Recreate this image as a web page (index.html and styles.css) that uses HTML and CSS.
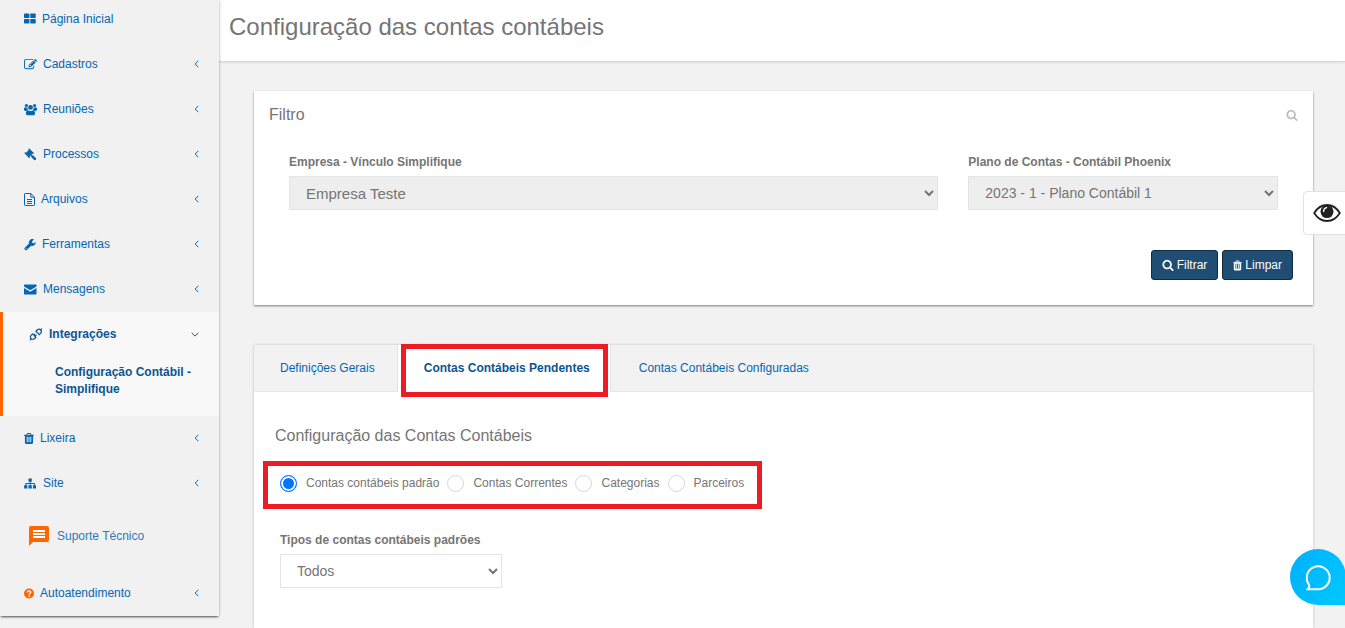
FILE: index.html
```html
<!DOCTYPE html>
<html lang="pt-BR">
<head>
<meta charset="utf-8">
<meta name="viewport" content="width=device-width, initial-scale=1">
<title>Configuração das contas contábeis</title>
<link rel="stylesheet" href="styles.css">
</head>
<body>
<svg class="sprite" aria-hidden="true">
  <symbol id="i-left" viewBox="0 0 5 8"><path d="M4.300 .8 1.200 4l3.100 3.200" fill="none" stroke="currentColor" stroke-width="1"/></symbol>
  <symbol id="i-search" viewBox="0 0 1792 1792"><path d="M1216 832q0-185-131.500-316.500t-316.500-131.500-316.500 131.500-131.500 316.500 131.500 316.500 316.500 131.500 316.500-131.500 131.500-316.500zm512 832q0 52-38 90t-90 38q-54 0-90-38l-343-342q-179 124-399 124-143 0-273.500-55.500t-225-150-150-225-55.500-273.500 55.500-273.500 150-225 225-150 273.500-55.500 273.500 55.500 225 150 150 225 55.500 273.500q0 220-124 399l343 343q37 37 37 90z"/></symbol>
  <symbol id="i-trash" viewBox="192 128 1408 1536"><path d="M704 1376v-704q0-14-9-23t-23-9h-64q-14 0-23 9t-9 23v704q0 14 9 23t23 9h64q14 0 23-9t9-23zm256 0v-704q0-14-9-23t-23-9h-64q-14 0-23 9t-9 23v704q0 14 9 23t23 9h64q14 0 23-9t9-23zm256 0v-704q0-14-9-23t-23-9h-64q-14 0-23 9t-9 23v704q0 14 9 23t23 9h64q14 0 23-9t9-23zm-544-992h448l-48-117q-7-9-17-11h-317q-10 2-17 11zm928 32v64q0 14-9 23t-23 9h-96v948q0 83-47 143.500t-113 60.500h-832q-66 0-113-58.500t-47-141.500v-952h-96q-14 0-23-9t-9-23v-64q0-14 9-23t23-9h309l70-167q15-37 54-63t79-26h320q40 0 79 26t54 63l70 167h309q14 0 23 9t9 23z"/></symbol>
</svg>

<div class="layout">
  <nav class="sidebar" aria-label="Menu principal">
    <ul class="menu">
      <li><a class="item" href="#">
        <svg class="ico w12" viewBox="0 0 12 12"><rect x="0" y="0" width="5.400" height="4.600" rx=".7"/><rect x="6.300" y="0" width="5.400" height="4.600" rx=".7"/><rect x="0" y="5.400" width="5.400" height="4.600" rx=".7"/><rect x="6.300" y="5.400" width="5.400" height="4.600" rx=".7"/></svg>
        <span>Página Inicial</span></a></li>
      <li><a class="item" href="#">
        <svg class="ico w13" viewBox="0 0 1792 1792"><path d="M888 1184l116-116-152-152-116 116v56h96v96h56zm440-720q-16-16-33 1l-350 350q-17 17-1 33t33-1l350-350q17-17 1-33zm80 594v190q0 119-84.500 203.500t-203.500 84.500h-832q-119 0-203.500-84.500t-84.500-203.500v-832q0-119 84.500-203.500t203.500-84.500h832q63 0 117 25 15 7 18 23 3 17-9 29l-49 49q-14 14-32 8-23-6-45-6h-832q-66 0-113 47t-47 113v832q0 66 47 113t113 47h832q66 0 113-47t47-113v-126q0-13 9-22l64-64q15-15 35-7t20 29zm-96-738l288 288-672 672h-288v-288zm444 132l-92 92-288-288 92-92q28-28 68-28t68 28l152 152q28 28 28 68t-28 68z"/></svg>
        <span>Cadastros</span><svg class="chev"><use href="#i-left"/></svg></a></li>
      <li><a class="item" href="#">
        <svg class="ico w13" viewBox="0 0 14 13"><circle cx="2.600" cy="2.200" r="1.700"/><circle cx="11.400" cy="2.200" r="1.700"/><circle cx="7" cy="4.300" r="2.600"/><path d="M0 6.200C0 5 .4 4 1.200 4c.7.500 1.500.6 2.400.3-.1 1 .2 2 .8 2.700C3.500 7 2.800 7.300 2.300 8H1.400C.5 8 0 7.300 0 6.200zM14 6.200c0-1.200-.4-2.200-1.200-2.200-.7.500-1.500.6-2.400.3.1 1-.2 2-.8 2.700.9 0 1.600.3 2.100 1h.9c.9 0 1.400-.7 1.400-1.800zM2.100 10.800c0-2 .7-3.600 2.300-3.600 1.600 1.200 3.600 1.200 5.200 0 1.600 0 2.300 1.600 2.300 3.600 0 1.200-.8 1.900-2 1.900H4.100c-1.200 0-2-.7-2-1.900z"/></svg>
        <span>Reuniões</span><svg class="chev"><use href="#i-left"/></svg></a></li>
      <li><a class="item" href="#">
        <svg class="ico w13" viewBox="0 0 13 13"><path d="M1.500 5.300 5.300 1.500 8.900 5.100 5.100 8.900z"/><path d="M5 1.200 9.100 5.300M1.200 5 5.300 9.100" fill="none" stroke="currentColor" stroke-width="1.500" stroke-linecap="round"/><path d="M6.800 6.800l1.300 1.300" fill="none" stroke="currentColor" stroke-width="1.500"/><path d="M8.600 8.600l2.300 2.300" fill="none" stroke="currentColor" stroke-width="2.700" stroke-linecap="round"/></svg>
        <span>Processos</span><svg class="chev"><use href="#i-left"/></svg></a></li>
      <li><a class="item" href="#">
        <svg class="ico w11" viewBox="0 0 11 13"><path d="M.5 1.200q0-.7.700-.7h5.600l3.700 3.700v7.600q0 .7-.7.700H1.200q-.7 0-.7-.7zM6.800.5v3.700h3.700M3 6.500h5M3 8.500h5M3 10.400h5" fill="none" stroke="currentColor"/></svg>
        <span>Arquivos</span><svg class="chev"><use href="#i-left"/></svg></a></li>
      <li><a class="item" href="#">
        <svg class="ico w12" viewBox="0 0 12 12"><path fill-rule="evenodd" d="M.6 9.400 5 5C4.500 2.500 6.300.6 8.300.6c.8 0 1.500.2 2 .5L8.200 2.600v1.500l1.400.8 2-1.300c.4 2.200-1.100 3.800-3.100 3.800-.5 0-.9-.1-1.300-.2L2.700 11.500c-.5.400-1 .4-1.400 0l-.7-.7c-.4-.4-.4-1 0-1.400zM2.100 9.400a.5.500 0 1 0 .1 1 .5.500 0 0 0-.1-1z"/></svg>
        <span>Ferramentas</span><svg class="chev"><use href="#i-left"/></svg></a></li>
      <li><a class="item" href="#">
        <svg class="ico w13" viewBox="0 0 13 11"><path d="M.6.500h11.300q.6 0 .6.600v1.500L6.300 6.200 0 2.600V1.100Q0 .5.600.500zM0 4l6.300 3.700L12.500 4v5.800q0 .7-.6.700H.6q-.6 0-.6-.7z"/></svg>
        <span>Mensagens</span><svg class="chev"><use href="#i-left"/></svg></a></li>
      <li class="open"><a class="item" href="#" aria-expanded="true">
        <svg class="ico w14" viewBox="0 0 14 14"><g fill="none" stroke="currentColor" stroke-width="1.300" stroke-linecap="round"><path d="M3.200 6.400 1.900 7.700c-1.100 1.100-1.100 2.700-.1 3.700s2.600 1 3.700-.1l1.300-1.300zM7 3.500l1.300-1.300c1.100-1.100 2.700-1.100 3.700-.1s1 2.600-.1 3.700L10.600 7.100zM1.900 11.400.8 12.700M11.900 2.100 13.100.9M4.600 7.700l1.200-1.200M5.900 9l1.200-1.200"/></g></svg>
        <span>Integrações</span><svg class="chev down" viewBox="0 0 8 5"><path d="M.7.900 4 4.100 7.300.9" fill="none" stroke="currentColor"/></svg></a>
        <a class="sub" href="#">Configuração Contábil - Simplifique</a></li>
      <li><a class="item" href="#">
        <svg class="ico w10"><use href="#i-trash"/></svg>
        <span>Lixeira</span><svg class="chev"><use href="#i-left"/></svg></a></li>
      <li><a class="item" href="#">
        <svg class="ico w13" viewBox="0 0 13 12"><path d="M4.500 1h3.300v3.200H6.600v1.300h4.200v2.300H12v3.200H8.900V7.800h1V6.400H6.600v1.400h1.200V11H4.500V7.800h1.200V6.400H2.400v1.400h1V11H.1V7.800h1.300V5.500h4.300V4.200H4.500z"/></svg>
        <span>Site</span><svg class="chev"><use href="#i-left"/></svg></a></li>
      <li><a class="item support" href="#">
        <svg class="bubble" viewBox="0 0 20 20"><path d="M2 0h16q2 0 2 2v12q0 2-2 2H4l-4 4V2Q0 0 2 0z"/><path d="M4 4h12v2H4zM4 7h12v2H4zM4 10h12v2H4z" fill="#fff"/></svg>
        <span>Suporte Técnico</span></a></li>
      <li><a class="item" href="#">
        <svg class="ico w10 orange" viewBox="0 0 11 12"><circle cx="5.500" cy="6" r="5.500"/><path d="M3.700 4.800c.1-2.300 3.800-2.200 3.700-.1 0 1.100-1.700 1.200-1.700 2.400M5.700 8v1.500" fill="none" stroke="#fff" stroke-width="1.500"/></svg>
        <span>Autoatendimento</span><svg class="chev"><use href="#i-left"/></svg></a></li>
    </ul>
  </nav>

  <div class="page">
    <header class="page-header"><h1>Configuração das contas contábeis</h1></header>
    <main class="content">
      <section class="panel">
        <div class="panel-head">
          <h2>Filtro</h2>
          <button class="icon-button" type="button" aria-label="Pesquisar"><svg><use href="#i-search"/></svg></button>
        </div>
        <form class="filter">
          <div class="fields">
            <div class="field wide">
              <label for="empresa">Empresa - Vínculo Simplifique</label>
              <select id="empresa" class="large" disabled><option>Empresa Teste</option></select>
            </div>
            <div class="field narrow">
              <label for="plano">Plano de Contas - Contábil Phoenix</label>
              <select id="plano" disabled><option>2023 - 1 - Plano Contábil 1</option></select>
            </div>
          </div>
          <div class="actions">
            <button class="btn" type="button"><svg><use href="#i-search"/></svg>Filtrar</button>
            <button class="btn" type="button"><svg class="bin"><use href="#i-trash"/></svg>Limpar</button>
          </div>
        </form>
      </section>

      <section class="panel tabs-panel">
        <nav class="tabs" aria-label="Contas">
          <a href="#">Definições Gerais</a>
          <a href="#" class="active" aria-current="page">Contas Contábeis Pendentes</a>
          <a href="#">Contas Contábeis Configuradas</a>
        </nav>
        <div class="tab-body">
          <h2>Configuração das Contas Contábeis</h2>
          <fieldset class="choices">
            <label><input type="radio" name="tipo" checked>Contas contábeis padrão</label>
            <label><input type="radio" name="tipo">Contas Correntes</label>
            <label><input type="radio" name="tipo">Categorias</label>
            <label><input type="radio" name="tipo">Parceiros</label>
          </fieldset>
          <div class="field types">
            <label for="tipos">Tipos de contas contábeis padrões</label>
            <select id="tipos"><option>Todos</option></select>
          </div>
        </div>
      </section>
    </main>
  </div>
</div>

<button class="eye" type="button" aria-label="Acessibilidade">
  <svg viewBox="0 0 28 20"><path d="M1.200 10C4.500 4.600 9 2 14 2s9.500 2.600 12.800 8C23.500 15.400 19 18 14 18S4.500 15.400 1.200 10z" fill="#fff" stroke="#222" stroke-width="1.800"/><circle cx="14" cy="8.600" r="6.500" fill="#222"/><path d="M10.600 8.500c0-2 1.200-3.500 3-3.800" fill="none" stroke="#fff" stroke-width="1.300" stroke-linecap="round"/></svg>
</button>
<button class="chat" type="button" aria-label="Abrir chat">
  <svg viewBox="0 0 26 26"><path d="M1.800 24.200c1.500-1.500 1.900-3 1.100-4.700A11.500 11.500 0 1 1 13 24.200z" fill="none" stroke="#fff" stroke-width="2"/></svg>
</button>
</body>
</html>
```

FILE: styles.css
```css
* { box-sizing: border-box; }

body {
  margin: 0;
  height: 100vh;
  overflow: hidden;
  background: #f2f2f2;
  color: #757575;
  font: 12px/17px "Liberation Sans", Arial, sans-serif;
}

h1, h2 { margin: 0; font-weight: 400; }
a { color: #0466b0; text-decoration: none; }
svg { fill: currentColor; flex: none; }
button, select, input { font-family: inherit; }
.sprite { position: absolute; width: 0; height: 0; }

.layout { display: flex; align-items: flex-start; height: 100%; }

/* Sidebar */
.sidebar {
  flex: 0 0 219px;
  background: #f1f1f1;
  box-shadow: 0 2px 2px -1px rgba(0, 0, 0, .6), 0 0 3px rgba(0, 0, 0, .25);
  clip-path: inset(0 -4px -6px 0);
  z-index: 1;
}
.menu { list-style: none; margin: -3px 0 0; padding: 0; }
.item {
  display: flex;
  align-items: center;
  gap: 6px;
  height: 45px;
  padding: 0 20px 1px 24px;
}
.ico { height: 13px; }
.w10 { width: 10px; }
.w11 { width: 11px; }
.w12 { width: 12px; }
.w13 { width: 13px; }
.w14 { width: 14px; }
.chev { width: 5px; height: 8px; margin-left: auto; }
.chev.down { width: 8px; height: 5px; }
.orange { color: #f60; }
.open {
  padding-bottom: 18px;
  border-left: 3px solid #f60;
  background: #f8f8f8;
  font-weight: 700;
}
.open a { color: #0c5590; }
.open .item { padding-left: 26px; }
.sub { display: block; padding: 7px 16px 0 52px; }
.support { gap: 8px; height: 65px; padding: 0 20px 5px 29px; color: #2f79b9; }
.bubble { width: 20px; height: 20px; color: #f60; }

/* Page */
.page { flex: 1; min-width: 0; display: flex; flex-direction: column; height: 100%; }
.page-header {
  padding: 12px 10px 19px;
  background: #fff;
  border-bottom: 1px solid #d9d9d9;
  box-shadow: 0 1px 2px rgba(0, 0, 0, .08);
}
h1 { font-size: 24px; line-height: 30px; }
.content {
  flex: 1;
  display: flex;
  flex-direction: column;
  gap: 40px;
  padding: 29px 32px 0 35px;
}
.panel { background: #fff; box-shadow: 0 1px 2px rgba(0, 0, 0, .5); }
.panel h2 { font-size: 16px; line-height: 24px; }
.panel-head {
  display: flex;
  align-items: center;
  justify-content: space-between;
  padding: 12px 15px 0;
}
.icon-button { padding: 0; border: 0; background: none; color: #bdbdbd; line-height: 0; }
.icon-button svg { width: 12px; height: 12px; }
.filter { padding: 27px 20px 25px 35px; }
.fields {
  display: grid;
  grid-template-columns: repeat(12, 1fr);
  column-gap: 30px;
  padding-right: 15px;
}
.wide { grid-column: span 8; }
.narrow { grid-column: span 4; }
.field { display: flex; flex-direction: column; gap: 5px; }
.field label { font-weight: 700; }
select {
  width: 100%;
  height: 34px;
  padding: 0 0 0 12px;
  border: 1px solid #e2e4e6;
  border-radius: 0;
  background: #fff;
  color: #757575;
  font-size: 14px;
}
select:disabled { background: #eee; color: #757575; opacity: 1; }
select.large { font-size: 15px; }
.actions { display: flex; justify-content: flex-end; gap: 4px; margin-top: 40px; }
.btn {
  display: flex;
  align-items: center;
  gap: 3px;
  height: 30px;
  padding: 0 10px;
  border: 1px solid #122b40;
  border-radius: 3px;
  background: #204d74;
  color: #fff;
  font-size: 12px;
}
.btn svg { width: 12px; height: 12px; }
.btn .bin { width: 9px; height: 11px; }

/* Tabs */
.tabs-panel { flex: 1; box-shadow: 0 0 3px rgba(0, 0, 0, .2); }
.tabs { display: flex; background: #f2f2f2; border-bottom: 1px solid #e7e7e7; }
.tabs a { padding: 15px 21px 14px 26px; }
.tabs .active {
  position: relative;
  margin: 0 2px -1px 1px;
  padding-right: 20px;
  border: solid #e4e4e4;
  border-width: 0 1px;
  background: #fff;
  color: #0c5590;
  font-weight: 700;
}
.tabs .active::after {
  content: "";
  position: absolute;
  inset: -1px 2px -5px 3px;
  border: 5px solid #ed1c24;
}
.tab-body { padding: 32px 9px 0; }
.tab-body h2 { padding-left: 12px; }
.choices {
  display: flex;
  align-items: center;
  gap: 8px;
  width: fit-content;
  height: 48px;
  margin: 13px 0 23px;
  padding: 0 13px 4px 12px;
  border: 5px solid #ed1c24;
}
.choices label { display: flex; align-items: center; gap: 9px; }
.choices input {
  appearance: none;
  width: 17px;
  height: 17px;
  margin: 0;
  border: 1px solid #d3d7db;
  border-radius: 50%;
  background: #fff;
}
.choices input:checked {
  border-color: #0075ff;
  background: #0075ff;
  box-shadow: inset 0 0 0 2px #fff;
}
.types { width: 222px; margin-left: 17px; }

/* Floating controls */
.eye {
  position: fixed;
  top: 191px;
  right: -4px;
  width: 46px;
  height: 44px;
  padding: 0 0 0 9px;
  border: 1px solid #e2e2e2;
  border-radius: 4px;
  background: #fff;
  text-align: left;
}
.eye svg { display: block; width: 28px; height: 20px; }
.chat {
  position: fixed;
  top: 549px;
  right: -1px;
  display: grid;
  place-items: center;
  width: 56px;
  height: 56px;
  padding: 1px 0 0 1px;
  border: 0;
  border-radius: 50% 50% 0 50%;
  background: linear-gradient(120deg, #00b0ff, #00c8ff);
}
.chat svg { width: 26px; height: 26px; }
```
